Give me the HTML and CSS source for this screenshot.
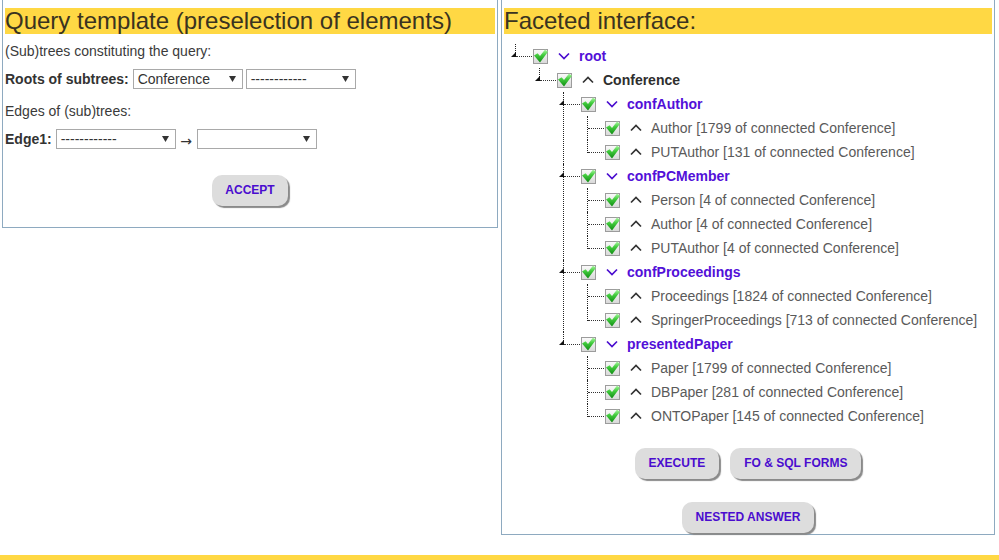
FILE: index.html
```html
<!DOCTYPE html>
<html lang="en">
<head>
<meta charset="utf-8">
<title>Query template</title>
<link rel="stylesheet" href="styles.css">
</head>
<body>
<svg width="0" height="0" class="defs">
  <defs>
    <linearGradient id="boxg" x1="0" y1="0" x2="0" y2="1">
      <stop offset="0" stop-color="#fbfbfb"/>
      <stop offset="1" stop-color="#d8d8d8"/>
    </linearGradient>
    <linearGradient id="chkg" x1="0" y1="0" x2="0" y2="1">
      <stop offset="0" stop-color="#b0f7a8"/>
      <stop offset="0.4" stop-color="#45cf40"/>
      <stop offset="1" stop-color="#0e8a12"/>
    </linearGradient>
    <symbol id="cb" viewBox="0 0 15 15">
      <rect x="0.5" y="0.5" width="14" height="14" fill="url(#boxg)" stroke="#9c9c9c"/>
      <polygon points="1,6.5 4.6,4.2 7,7 12,0.5 15,2.8 7,13.5" fill="url(#chkg)"/>
    </symbol>
    <symbol id="down" viewBox="0 0 12 8">
      <polyline points="1,1.5 6,6.5 11,1.5" fill="none" stroke="currentColor" stroke-width="1.7"/>
    </symbol>
    <symbol id="up" viewBox="0 0 12 8">
      <polyline points="1,6.5 6,1.5 11,6.5" fill="none" stroke="currentColor" stroke-width="1.7"/>
    </symbol>
    <symbol id="tri" viewBox="0 0 5 5">
      <polygon points="0,5 5,5 5,0" fill="#111"/>
    </symbol>
    <symbol id="selarrow" viewBox="0 0 7 6">
      <polygon points="0,0 7,0 3.5,6" fill="#333"/>
    </symbol>
  </defs>
</svg>

<div class="page">
  <section class="panel panel-left">
    <h2 class="title">Query template (preselection of elements)</h2>
    <p class="note">(Sub)trees constituting the query:</p>
    <div class="field">
      <b class="label">Roots of subtrees:</b>
      <div class="sel w110"><span>Conference</span><svg class="sel-arrow"><use href="#selarrow"/></svg></div>
      <div class="sel w110"><span>------------</span><svg class="sel-arrow"><use href="#selarrow"/></svg></div>
    </div>
    <p class="note note-edges">Edges of (sub)trees:</p>
    <div class="field">
      <b class="label">Edge1:</b>
      <div class="sel w120"><span>------------</span><svg class="sel-arrow"><use href="#selarrow"/></svg></div>
      <span class="arrow">&rarr;</span>
      <div class="sel w120"><span></span><svg class="sel-arrow"><use href="#selarrow"/></svg></div>
    </div>
    <div class="actions actions-left">
      <button class="btn">ACCEPT</button>
    </div>
  </section>

  <section class="panel panel-right">
    <h2 class="title">Faceted interface:</h2>
    <ul class="tree">
      <li class="parent">
        <div class="row"><span class="conn"><svg class="tri"><use href="#tri"/></svg></span><svg class="cb"><use href="#cb"/></svg><svg class="chev down"><use href="#down"/></svg><span class="lbl lbl-link">root</span></div>
        <ul>
          <li class="parent">
            <div class="row"><span class="conn"><svg class="tri"><use href="#tri"/></svg></span><svg class="cb"><use href="#cb"/></svg><svg class="chev up"><use href="#up"/></svg><span class="lbl lbl-main">Conference</span></div>
            <ul>
              <li class="parent">
                <div class="row"><span class="conn"><svg class="tri"><use href="#tri"/></svg></span><svg class="cb"><use href="#cb"/></svg><svg class="chev down"><use href="#down"/></svg><span class="lbl lbl-link">confAuthor</span></div>
                <ul>
                  <li><div class="row"><span class="conn"></span><svg class="cb"><use href="#cb"/></svg><svg class="chev up"><use href="#up"/></svg><span class="lbl">Author [1799 of connected Conference]</span></div></li>
                  <li><div class="row"><span class="conn"></span><svg class="cb"><use href="#cb"/></svg><svg class="chev up"><use href="#up"/></svg><span class="lbl">PUTAuthor [131 of connected Conference]</span></div></li>
                </ul>
              </li>
              <li class="parent">
                <div class="row"><span class="conn"><svg class="tri"><use href="#tri"/></svg></span><svg class="cb"><use href="#cb"/></svg><svg class="chev down"><use href="#down"/></svg><span class="lbl lbl-link">confPCMember</span></div>
                <ul>
                  <li><div class="row"><span class="conn"></span><svg class="cb"><use href="#cb"/></svg><svg class="chev up"><use href="#up"/></svg><span class="lbl">Person [4 of connected Conference]</span></div></li>
                  <li><div class="row"><span class="conn"></span><svg class="cb"><use href="#cb"/></svg><svg class="chev up"><use href="#up"/></svg><span class="lbl">Author [4 of connected Conference]</span></div></li>
                  <li><div class="row"><span class="conn"></span><svg class="cb"><use href="#cb"/></svg><svg class="chev up"><use href="#up"/></svg><span class="lbl">PUTAuthor [4 of connected Conference]</span></div></li>
                </ul>
              </li>
              <li class="parent">
                <div class="row"><span class="conn"><svg class="tri"><use href="#tri"/></svg></span><svg class="cb"><use href="#cb"/></svg><svg class="chev down"><use href="#down"/></svg><span class="lbl lbl-link">confProceedings</span></div>
                <ul>
                  <li><div class="row"><span class="conn"></span><svg class="cb"><use href="#cb"/></svg><svg class="chev up"><use href="#up"/></svg><span class="lbl">Proceedings [1824 of connected Conference]</span></div></li>
                  <li><div class="row"><span class="conn"></span><svg class="cb"><use href="#cb"/></svg><svg class="chev up"><use href="#up"/></svg><span class="lbl">SpringerProceedings [713 of connected Conference]</span></div></li>
                </ul>
              </li>
              <li class="parent">
                <div class="row"><span class="conn"><svg class="tri"><use href="#tri"/></svg></span><svg class="cb"><use href="#cb"/></svg><svg class="chev down"><use href="#down"/></svg><span class="lbl lbl-link">presentedPaper</span></div>
                <ul>
                  <li><div class="row"><span class="conn"></span><svg class="cb"><use href="#cb"/></svg><svg class="chev up"><use href="#up"/></svg><span class="lbl">Paper [1799 of connected Conference]</span></div></li>
                  <li><div class="row"><span class="conn"></span><svg class="cb"><use href="#cb"/></svg><svg class="chev up"><use href="#up"/></svg><span class="lbl">DBPaper [281 of connected Conference]</span></div></li>
                  <li><div class="row"><span class="conn"></span><svg class="cb"><use href="#cb"/></svg><svg class="chev up"><use href="#up"/></svg><span class="lbl">ONTOPaper [145 of connected Conference]</span></div></li>
                </ul>
              </li>
            </ul>
          </li>
        </ul>
      </li>
    </ul>
    <div class="actions actions-exec">
      <button class="btn">EXECUTE</button>
      <button class="btn">FO &amp; SQL FORMS</button>
    </div>
    <div class="actions actions-nested">
      <button class="btn">NESTED ANSWER</button>
    </div>
  </section>
</div>
<div class="footer-bar"></div>
</body>
</html>
```

FILE: styles.css
```css
* { box-sizing: border-box; }

html, body {
  margin: 0;
  padding: 0;
  background: #ffffff;
  font-family: "Liberation Sans", Arial, sans-serif;
  font-size: 14px;
  color: #333333;
  overflow: hidden;
}

.defs { position: absolute; width: 0; height: 0; }

.page {
  display: flex;
  align-items: flex-start;
  gap: 3px;
  padding-left: 2px;
}

.panel {
  border: 1px solid #8eaac0;
  border-top: none;
  padding: 8px 2px 0 2px;
}

.panel-left {
  width: 496px;
  height: 228px;
}

.panel-right {
  width: 494px;
  height: 535px;
}

.title {
  margin: 0;
  background: #ffd844;
  color: #3a3320;
  font-weight: normal;
  font-size: 24px;
  line-height: 26px;
  height: 26px;
  white-space: nowrap;
  overflow: hidden;
}

.note {
  margin: 9px 0 0 0;
  line-height: 16px;
  color: #3a3a3a;
}

.note-edges { margin-top: 14px; }

.field {
  display: flex;
  align-items: center;
  gap: 3px;
  margin-top: 10px;
  height: 20px;
}

.label {
  font-weight: bold;
  color: #333;
  margin-right: 1px;
}

.sel {
  display: flex;
  align-items: center;
  justify-content: space-between;
  height: 20px;
  border: 1px solid #a9a9a9;
  background: #fff;
  padding: 0 6px 0 4px;
  color: #333;
  font-size: 14px;
  line-height: 18px;
}

.w110 { width: 110px; }
.w120 { width: 120px; }

.sel-arrow { width: 7px; height: 6px; }

.arrow {
  font-family: "DejaVu Sans", sans-serif;
  font-size: 14px;
  line-height: 16px;
  color: #333;
  margin: 4px 0 0 0;
  width: 15px;
  text-align: center;
}

.actions {
  display: flex;
  justify-content: center;
  gap: 11px;
}

.actions-left { margin-top: 26px; }
.actions-exec { margin-top: 20px; }
.actions-nested { margin-top: 23px; }

.btn {
  font-family: "Liberation Sans", Arial, sans-serif;
  font-size: 12px;
  font-weight: bold;
  line-height: 14px;
  color: #4a0ccf;
  background: #dddddd;
  border: none;
  border-radius: 10px;
  padding: 8px 14px 9px;
  box-shadow: 2px 2px 1px #8a8a8a;
  cursor: pointer;
}

.actions-left .btn { padding: 8px 13px 9px; }

/* Tree */
.tree, .tree ul {
  list-style: none;
  margin: 0;
}

.tree {
  padding: 0 0 0 11px;
  margin-top: 10px;
}

.tree ul {
  padding: 0 0 0 6px;
}

.tree li {
  position: relative;
  padding-left: 18px;
}

.tree li::before {
  content: "";
  position: absolute;
  left: 0;
  top: 0;
  height: 13px;
  border-left: 1px dotted #222;
}

.tree li:not(:last-child)::before {
  bottom: 0;
  height: auto;
}

.row {
  display: flex;
  align-items: center;
  height: 24px;
  margin-left: -18px;
  white-space: nowrap;
}

.conn {
  position: relative;
  width: 16px;
  margin-left: 1px;
  margin-right: 1px;
  height: 0;
  border-top: 1px dotted #333;
  align-self: center;
  margin-top: 1px;
}

.tri {
  position: absolute;
  left: -5px;
  top: -5px;
  width: 5px;
  height: 5px;
}

.cb {
  width: 15px;
  height: 15px;
  flex: none;
}

.chev {
  width: 12px;
  height: 8px;
  margin: 0 9px 0 10px;
  flex: none;
}

.chev.down { color: #4a0ccf; }
.chev.up { color: #333; }

.lbl {
  color: #5a5a5a;
  font-size: 14px;
}

.lbl-link {
  color: #5210d8;
  font-weight: bold;
}

.lbl-main {
  color: #2e2e2e;
  font-weight: bold;
}

.footer-bar {
  margin-top: 20px;
  height: 30px;
  background: #ffd844;
}
```
